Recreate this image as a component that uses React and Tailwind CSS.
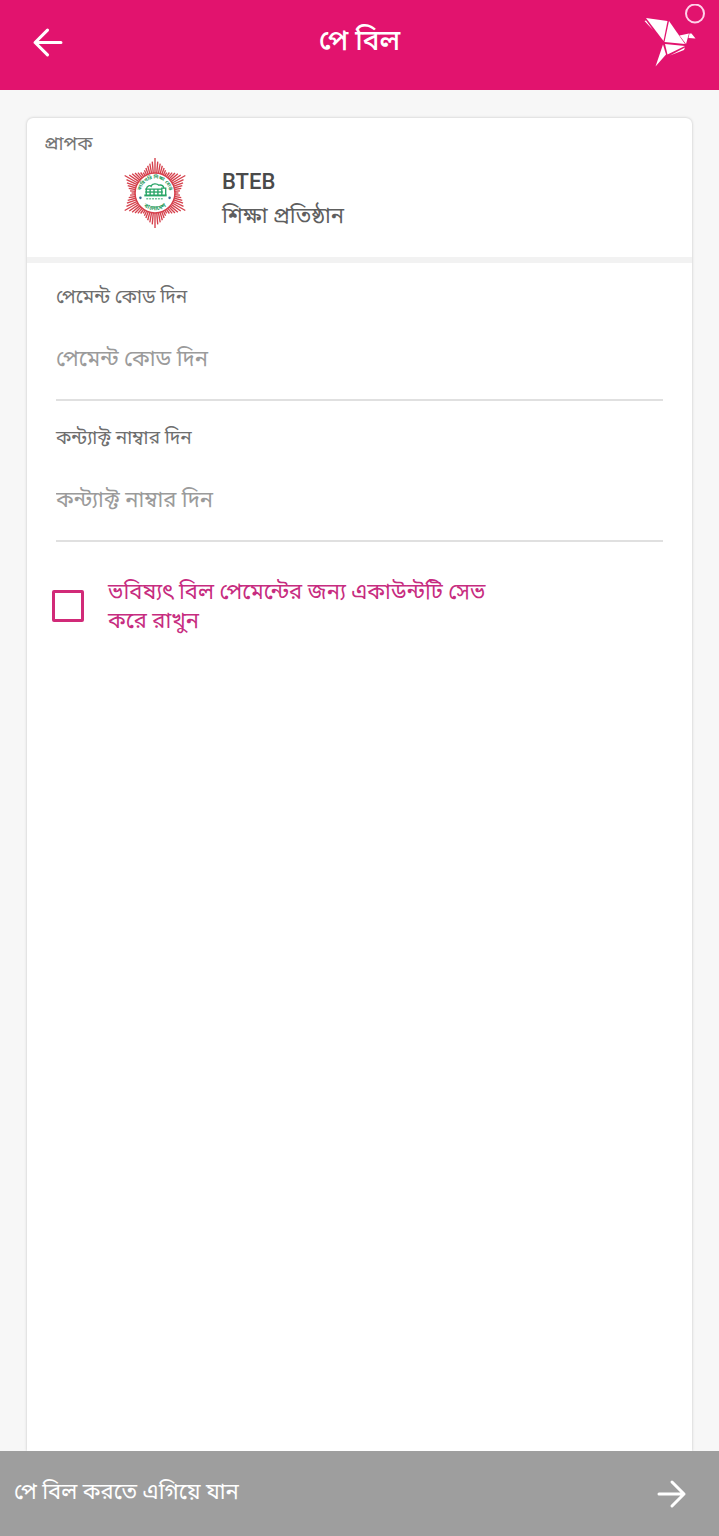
import React, { useState } from 'react';

const fields = [
  { id: 'payment-code', label: 'পেমেন্ট কোড দিন' },
  { id: 'contact-number', label: 'কন্ট্যাক্ট নাম্বার দিন' },
];

// Six-pointed burst: rays are longest at every 60 degrees, shortest between
const rays = Array.from({ length: 72 }, (_, i) => {
  const deg = i * 5;
  const off = Math.abs(((deg + 30) % 60) - 30);
  const length = off === 0 ? 36 : 34 - off * 0.33;
  const rad = ((deg - 90) * Math.PI) / 180;
  return {
    deg,
    x1: Math.cos(rad) * 19,
    y1: Math.sin(rad) * 19,
    x2: Math.cos(rad) * length,
    y2: Math.sin(rad) * length,
  };
});

const BoardLogo = () => (
  <svg viewBox="-36 -36 72 72" className="w-[70px] h-[70px]" role="img" aria-label="BTEB">
    <g stroke="#d5404c" strokeWidth="1.4">
      {rays.map((ray) => (
        <line key={ray.deg} x1={ray.x1} y1={ray.y1} x2={ray.x2} y2={ray.y2} />
      ))}
    </g>
    <circle r="20.5" fill="#fff" stroke="#d5404c" strokeWidth="1.5" />
    <defs>
      <path id="arc-top" d="M-14.5 3 A14.8 14.8 0 1 1 14.5 3" />
      <path id="arc-bottom" d="M-14 11 A18 18 0 0 0 14 11" />
    </defs>
    <g fill="#1f9a5b" fontWeight="700" textAnchor="middle">
      <text fontSize="5">
        <textPath href="#arc-top" startOffset="50%">কারিগরি শিক্ষা বোর্ড</textPath>
      </text>
      <text fontSize="6">
        <textPath href="#arc-bottom" startOffset="50%">বাংলাদেশ</textPath>
      </text>
    </g>
    <g fill="none" stroke="#2aa567" strokeWidth="1.4">
      <path d="M-9 -4 C-8 -8 -5 -8 -4 -7 C-3 -10 2 -10 4 -8 C7 -9 9 -7 9 -5" />
      <path d="M-10 -4 H7 M7 2 V-5 H11 V2" />
      <path d="M-9 -4 V2 M-5 -4 V2 M-1 -4 V2 M3 -4 V2" />
      <path d="M-10 -1 H8" />
      <path d="M-11 2.5 H12" strokeWidth="2" />
      <path d="M-9 6 H9" strokeWidth="1" strokeDasharray="2 1" />
    </g>
    <g fill="#3b6f96">
      <circle cx="-15" cy="5" r="1.3" />
      <circle cx="15" cy="5" r="1.3" />
    </g>
  </svg>
);

const BirdLogo = () => (
  <svg viewBox="0 0 64 66" className="w-[64px] h-[66px]" fill="#fff" aria-hidden="true">
    <path d="M3 14 L24.5 17 L20.5 37Z" />
    <path d="M1.5 17 L3 16.5 L10 26Z" />
    <path d="M26 17 L42 40 L21.5 38Z" />
    <path d="M20 40.5 L23 50.5 L12.5 62.5Z" />
    <path d="M22 40 L42 42 L24.5 50.500Z" />
    <path d="M42 43.5 L41 46 L27 51.500Z" />
    <path d="M36.5 31.5 L46 29.5 L43 40Z" />
    <path d="M46.5 29.5 L48.5 29.5 L52.5 34.5 L45.5 34Z" />
    <circle cx="52" cy="9.5" r="9" fill="none" stroke="#ffd3ea" strokeWidth="2" />
  </svg>
);

const Arrow = ({ className }) => (
  <svg
    viewBox="0 0 30 30"
    className={className}
    fill="none"
    stroke="#fff"
    strokeWidth="3"
    strokeLinecap="round"
    strokeLinejoin="round"
    aria-hidden="true"
  >
    <path d="M15 3 L3 15 L15 27 M3 15 H28" />
  </svg>
);

const App = () => {
  const [values, setValues] = useState({});
  const [saveAccount, setSaveAccount] = useState(false);

  return (
    <div className="min-h-screen flex flex-col bg-[#f7f7f7] font-['Roboto','Noto_Sans_Bengali','Noto_Sans',sans-serif]">
      {/* Header */}
      <header className="h-[90px] shrink-0 grid grid-cols-[1fr_auto_1fr] items-center bg-[#e2136e] px-3">
        <button type="button" aria-label="Back" className="justify-self-start pl-5 pb-1.5">
          <Arrow className="w-[31px] h-[31px]" />
        </button>
        <h1 className="text-[28px] leading-8 font-medium text-white pb-2">পে বিল</h1>
        <div className="justify-self-end pb-4">
          <BirdLogo />
        </div>
      </header>

      {/* Bill form */}
      <main className="flex-1 flex flex-col px-[27px] pt-7">
        <form
          id="bill-form"
          className="flex-1 bg-white rounded-t-md shadow-[0_0_3px_rgba(0,0,0,0.22)]"
          onSubmit={(e) => e.preventDefault()}
        >
          <section className="h-[145px] px-[17px] pt-3 border-b-6 border-[#f2f2f2]">
            <h2 className="text-[19px] leading-7 text-[#757575]">প্রাপক</h2>
            <div className="flex items-start gap-8 pl-[76px]">
              <BoardLogo />
              <div className="pt-2">
                <p className="text-[22px] leading-8 font-medium text-[#4a4a4a]">BTEB</p>
                <p className="text-[22px] leading-9 text-[#5e5e5e]">শিক্ষা প্রতিষ্ঠান</p>
              </div>
            </div>
          </section>

          <section className="px-[29px]">
            {fields.map((field) => (
              <div key={field.id} className="h-[141px] pt-[22px] pb-[3px] flex flex-col">
                <label htmlFor={field.id} className="text-[19px] leading-6 text-[#6e6e6e]">
                  {field.label}
                </label>
                <input
                  id={field.id}
                  type="text"
                  value={values[field.id] || ''}
                  onChange={(e) => setValues({ ...values, [field.id]: e.target.value })}
                  placeholder={field.label}
                  className="w-full flex-1 pt-2 text-[22px] border-b-2 border-[#e0e0e0] text-[#4a4a4a] placeholder:text-[#9b9b9b] focus:outline-none"
                />
              </div>
            ))}
          </section>

          <div className="flex items-center gap-6 pl-[25px] pt-8">
            <input
              id="save-account"
              type="checkbox"
              checked={saveAccount}
              onChange={(e) => setSaveAccount(e.target.checked)}
              className="appearance-none w-8 h-8 shrink-0 border-3 border-[#d12a78] rounded-xs checked:bg-[#d12a78]"
            />
            <label htmlFor="save-account" className="w-[400px] text-[22px] leading-[29px] text-[#c72c80]">
              ভবিষ্যৎ বিল পেমেন্টের জন্য একাউন্টটি সেভ করে রাখুন
            </label>
          </div>
        </form>
      </main>

      {/* Submit bar */}
      <button
        type="submit"
        form="bill-form"
        className="h-[85px] shrink-0 flex items-center justify-between bg-[#9e9e9e] pl-[14px] pr-8 text-[22px] text-white"
      >
        <span className="pb-1">পে বিল করতে এগিয়ে যান</span>
        <Arrow className="w-[30px] h-[30px] rotate-180" />
      </button>
    </div>
  );
};

export default App;
